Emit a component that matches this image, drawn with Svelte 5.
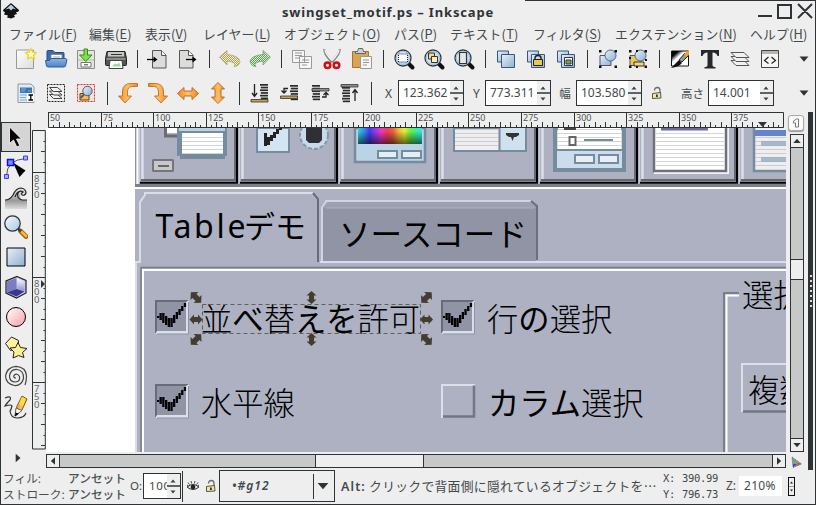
<script>
  const menus = [
    ['ファイル', 'F', 80], ['編集', 'E', 56], ['表示', 'V', 58], ['レイヤー', 'L', 81], ['オブジェクト', 'O', 110],
    ['パス', 'P', 56], ['テキスト', 'T', 83], ['フィルタ', 'S', 82], ['エクステンション', 'N', 135], ['ヘルプ', 'H', 62]
  ];
  const commands = ['new', 'open', 'save', 'print', '|', 'import', 'export', '|', 'undo', 'redo', '|', 'copy', 'cut', 'paste', '|',
    'zoomsel', 'zoomdraw', 'zoompage', '|', 'dup', 'clone', 'unlink', '|', 'group', 'ungroup', '|', 'fill', 'text', 'layers', 'xml'];
  const controls = ['selall', 'sellayers', 'desel', '|', 'rotl', 'rotr', 'fliph', 'flipv', '|', 'bottom', 'lower', 'raise', 'top', '|'];
  const tools = ['select', 'node', 'tweak', 'zoom', 'rect', 'box3d', 'circle', 'star', 'spiral', 'pencil'];
  const hTicks = Array.from({ length: 140 }, (_, i) => ({ x: Math.round(48 + i * 5.255), i })).filter((t) => t.x < 780);
  const vTicks = Array.from({ length: 31 }, (_, i) => ({ y: Math.round(130 + i * 10.5), i }));
  const hLabels = Array.from({ length: 14 }, (_, i) => ({ x: Math.round(48 + i * 52.55), n: 50 + i * 25 }));
  const vLabels = [[172, '850'], [277, '800'], [382, '750']];
  const hues = ['#28d8d0', '#3a8cf0', '#3c3cf0', '#9c38e8', '#f038c0', '#f03c60', '#e86038', '#f0b838', '#e0f038', '#70f040', '#38f0a0', '#38e0e8'];
  const ticks = [[157, 316, 2], [159.5, 313, 7], [162.2, 313, 10], [165, 316, 9], [167.700, 318, 9], [170.4, 318, 9], [173, 315, 8], [175.7, 312, 7], [178.4, 309, 6], [181.1, 306, 5], [183.800, 303, 4]];
</script>

{#snippet lens()}
  <path d="M16 16l4.500 4.500" stroke="#111" stroke-width="4" stroke-linecap="round" />
  <circle cx="11" cy="11" r="8" fill="url(#glass)" stroke="#30363c" stroke-width="1.300" />
  <circle cx="11" cy="11" r="6.700" fill="none" stroke="#a8c4e4" stroke-width="1.200" />
{/snippet}

{#snippet bars(y0)}
  {#each [0, 1, 2, 3, 4, 5] as n}
    <rect x={12 + (n % 2) * .8} y={y0 + n * 2.7} width={8 - (n % 2) * .8} height="1.700" fill="#2a2a2a" />
  {/each}
{/snippet}

{#snippet icon(name)}
  <svg class="ic" viewBox="0 0 24 24" width="24" height="24">
    {#if name === 'new'}
      <path d="M2.500 3h17v18.500h-17z" fill="url(#paper)" stroke="#9a9a96" />
      <path d="M17 1.800l1.700 3.200 3.500.6-2.500 2.600.5 3.500-3.200-1.600-3.200 1.600.5-3.500-2.500-2.600 3.500-.6z" fill="#fffce0" stroke="#f4d428" stroke-width="1.400" />
    {:else if name === 'open'}
      <path d="M3 4.500q0-1 1-1h5l2 2h8q1 0 1 1v12H3z" fill="#3c6caa" stroke="#244a80" />
      <path d="M7 7.500h11v8H7z" fill="#fff" stroke="#888" /><path d="M9 10h7M9 12h5" stroke="#aaa" />
      <path d="M1.500 13.500h4l1.500-2h14.500l1.500 1-1.500 6.500-1 1H3.500l-1-1z" fill="url(#blue)" stroke="#2c5c9c" />
    {:else if name === 'save'}
      <path d="M3.500 3.500h17v18h-17z" fill="#e4e5e2" stroke="#8c8e8a" /><path d="M4 13h16" stroke="#b4b6b2" />
      <path d="M7 15.500h10v4.500H7z" fill="#fafafa" stroke="#777" /><path d="M10 17.800h4" stroke="#444" />
      <path d="M10 2h3.500v6h4.500L11.800 14.500 5.500 8H10z" fill="#7ce040" stroke="#388c14" />
    {:else if name === 'print'}
      <path d="M3 4.500h18l1.500 7v6q0 1-1 1h-19q-1 0-1-1v-6z" fill="#555753" stroke="#222" />
      <path d="M4 5h16v4.500H4z" fill="#c8cac6" /><path d="M7 7.500h11" stroke="#333" />
      <path d="M2.500 11h19v2h-19z" fill="#8a8c88" /><path d="M6 13.500h12l1 8H5z" fill="#fff" stroke="#444" />
      <path d="M8 19.500l3-3 2 1 2-2 2 4z" fill="#98dc90" />
    {:else if name === 'import' || name === 'export'}
      {@const dx = name === 'import' ? 3 : 0}
      <path d="M{3.5 + dx} 3.500h9l4.500 4.500v13h-13.500z" fill="#dcdddb" stroke="#555" />
      <path d="M{12.5 + dx} 3.500v5h4.500" fill="#fff" stroke="#555" />
      {#if name === 'import'}<path d="M1 12.500h7" stroke="#000" stroke-width="1.300" /><path d="M7.500 9.500l4 3-4 3z" />
      {:else}<path d="M10 12.500h8" stroke="#000" stroke-width="1.300" /><path d="M16.500 9.500l4 3-4 3z" />{/if}
    {:else if name === 'undo'}
      <path d="M1.500 10L9 3.500v4q12 1 13 7-1 5-6 5 4-4-7-5.500v4z" fill="url(#dotgold)" stroke="#b0a672" stroke-width=".8" />
    {:else if name === 'redo'}
      <path d="M22.500 10L15 3.500v4q-12 1-13 7 1 5 6 5-4-4 7-5.500v4z" fill="url(#dotgreen)" stroke="#7aa672" stroke-width=".8" />
    {:else if name === 'copy'}
      <path d="M2.500 3.500h12v12h-12zM9.500 9.500h12v12h-12z" fill="#f6f6f5" stroke="#999" />
      <path d="M5 6h7M5 8.500h7M5 11h4M12 13h7M12 15.500h7M12 18h5" stroke="#999" />
    {:else if name === 'cut'}
      <path d="M4.500 2q-1 4 7.500 13M19.500 2q1 4-8 13" stroke="#888a85" stroke-width="2.600" fill="none" />
      <path d="M5 2.500q0 4 7 11M19 2.500q0 4-7 11" stroke="#f8f8f8" stroke-width="1.300" fill="none" />
      <circle cx="7.500" cy="18.300" r="2.800" fill="none" stroke="#cc1018" stroke-width="2.500" /><circle cx="16.500" cy="18.300" r="2.800" fill="none" stroke="#cc1018" stroke-width="2.500" />
    {:else if name === 'paste'}
      <path d="M2.500 4.500h16v16h-16z" fill="#d9a458" stroke="#a87428" />
      <path d="M5.500 6.500v-2h2l1-3h4l1 3h2v2z" fill="#d0d0ce" stroke="#666" />
      <path d="M10.500 9.500h11v12h-11z" fill="#f6f6f5" stroke="#999" /><path d="M13 13h6M13 15.500h6M13 18h4" stroke="#999" />
    {:else if name === 'zoomsel'}
      {@render lens()}<path d="M6.500 7h9v8h-9z" fill="#fff" stroke="#222" stroke-dasharray="1 1" />
    {:else if name === 'zoomdraw'}
      {@render lens()}<path d="M6.500 6h6v6h-6z" fill="#f0d880" stroke="#333" /><path d="M9.500 9.500h6v6h-6z" fill="#fff0b0" stroke="#333" />
    {:else if name === 'zoompage'}
      {@render lens()}<path d="M7.500 5.500h7v11h-7z" fill="#e4e8ec" stroke="#333" stroke-width="1.200" />
    {:else if name === 'dup' || name === 'clone' || name === 'unlink'}
      <path d="M3.500 4h11v11h-11z" fill="url(#sky)" stroke="#37567c" /><path d="M7.500 7.500h13v13h-13z" fill="url(#sky)" stroke="#37567c" />
      {#if name === 'clone'}<path d="M11 13v-2q0-2.500 3-2.500t3 2.500v2" fill="none" stroke="#222" stroke-width="1.400" /><path d="M9.500 12.500h9v6h-9z" fill="#f0c848" stroke="#222" />{/if}
      {#if name === 'unlink'}<path d="M10.500 10.500h8v8h-8z" fill="#fff" stroke="#333" /><path d="M12 13h5v4h-5z" fill="#78b040" stroke="#333" />{/if}
    {:else if name === 'group' || name === 'ungroup'}
      <path d="M4 8.500h11v10H4z" fill={name === 'group' ? 'url(#sky)' : '#f0c850'} stroke="#556" />
      {#if name === 'ungroup'}<path d="M8 15h10v4H8z" fill="#f4d878" stroke="#333" />{/if}
      <circle cx="14.500" cy="8.500" r="5.500" fill="url(#sky)" stroke="#476890" />
      <path d="M3 3h2.500v2.500H3zM18.500 3H21v2.500h-2.500zM3 18.500h2.500V21H3zM18.500 18.500H21V21h-2.500z" fill="#111" />
      {#if name === 'ungroup'}<path d="M10 3h2v2h-2zM3 10h2v2H3zM10 19h2v2h-2zM19 12h2v2h-2z" fill="#111" />{/if}
    {:else if name === 'fill'}
      <path d="M3.500 4h17v15h-17z" fill="url(#bw)" stroke="#111" /><path d="M3 21l8-8 3 3q-3 4-11 5z" fill="#111" />
      <path d="M11 13l6-7 3 3-6 6z" fill="#999" stroke="#222" /><path d="M16 7l5-4v5l-3 2z" fill="#f4a020" />
    {:else if name === 'text'}
      <path d="M3 3h18v6h-1.500q-1-3.500-5-3.500V18q0 2 3 2v1.500h-11V20q3 0 3-2V5.500q-4 0-5 3.500H3z" fill="#26292b" />
    {:else if name === 'layers'}
      {#each [16, 12, 8] as y}<path d="M3 {y - 2.5}h13l5 5H8z" fill="#f2f2f1" stroke="#555" />{/each}
    {:else if name === 'xml'}
      <path d="M3.500 3.500h17v17h-17z" fill="#f5f5f3" stroke="#444" /><path d="M4 4h16v3H4z" fill="#b4b6b4" />
      <path d="M10.500 10l-4 3.500 4 3M13.500 10l4 3.500-4 3" fill="none" stroke="#222" stroke-width="1.200" />
    {:else if name === 'selall'}
      <path d="M4 3h13l3 3v15.500H4z" fill="#e2ebf5" stroke="#8f989f" /><path d="M6 6.500h12V12H6z" fill="#3c74ac" />
      <path d="M7 8h5M7 10h4M14 10h3M6 14h8M6 16.500h6M6 19h7" stroke="#7cabd8" />
      <path d="M13 12.500h7.500v8H13z" fill="#fff" /><path d="M14.500 14h4.500M16.800 14v5M14.500 19h4.500" stroke="#000" stroke-width="1.300" />
    {:else if name === 'sellayers' || name === 'desel'}
      <rect x="3.500" y="3.500" width="17" height="17" fill={name === 'desel' ? '#f2e4e2' : '#eee'} stroke={name === 'desel' ? '#e83030' : '#222'} stroke-width="1" stroke-dasharray="2 1" />
      {#if name === 'desel'}<path d="M6 12.500h9v6.500H6z" fill="#f0c040" stroke="#5a4810" /><circle cx="13.500" cy="10" r="4.700" fill="url(#sky)" stroke="#557" /><path d="M10 13.500l-3.500 3.500" stroke="#557" stroke-width="2" />
      {:else}{#each [15, 11.5, 8] as y}<path d="M5.500 {y - 1.5}h8l4.500 4H9.500z" fill="#f2f2f1" stroke="#444" />{/each}{/if}
    {:else if name === 'rotl'}
      <path d="M21.500 2.500H15q-8 0-8.500 7.500v5H2.500l6.500 7 6.500-7h-4v-4q0-5 4-5.500h6z" fill="url(#orange)" stroke="#c07020" stroke-width=".9" />
    {:else if name === 'rotr'}
      <path d="M2.500 2.500H9q8 0 8.500 7.500v5h4L15 22l-6.500-7h4v-4q0-5-4-5.500h-6z" fill="url(#orange)" stroke="#c07020" stroke-width=".9" />
    {:else if name === 'fliph'}
      <path d="M1.500 12.500L8 6.500v3.500h8V6.500l6.500 6-6.500 6V15H8v3.500z" fill="url(#orange)" stroke="#b86414" stroke-width=".9" />
    {:else if name === 'flipv'}
      <path d="M12 1.500L18.500 8H15v8h3.500L12 22.500 5.500 16H9V8H5.500z" fill="url(#orange)" stroke="#b86414" stroke-width=".9" />
    {:else if name === 'bottom'}
      {@render bars(3)}<path d="M6.500 3v12M4 12l2.500 3.500L9 12" fill="none" stroke="#222" stroke-width="1.300" /><path d="M3 18.500h17v2.500H3z" fill="#c8a050" stroke="#333" stroke-width=".8" />
    {:else if name === 'lower'}
      {@render bars(4)}<path d="M10 7.500H6v4M3.500 9.500L6 12l2.500-2.500" fill="none" stroke="#222" stroke-width="1.300" /><path d="M2.500 15h17v2.500h-17z" fill="#c8a050" stroke="#333" stroke-width=".8" />
    {:else if name === 'raise'}
      <g transform="translate(-8 0)">{@render bars(4)}</g><path d="M4 7.500h17v2.500H4z" fill="#8a9098" stroke="#333" stroke-width=".8" /><path d="M14 16h4v-4M15.500 14l2.500-2.500 2.500 2.500" fill="none" stroke="#222" stroke-width="1.300" />
    {:else if name === 'top'}
      <g transform="translate(-8 0)">{@render bars(6)}</g><path d="M3 3.500h17V6H3z" fill="#8a9098" stroke="#333" stroke-width=".8" /><path d="M17 20V9M14.500 12L17 8.500l2.500 3.500" fill="none" stroke="#222" stroke-width="1.300" />
    {:else if name === 'select'}
      <path d="M5.500 2v16.500l4-3.500 3.300 7 3-1.500-3.300-6.500h5z" fill="#000" stroke="#fff" stroke-width=".8" />
    {:else if name === 'node'}
      <path d="M2.500 21q0-16 19-17.500" fill="none" stroke="#555" /><path d="M9 7.500l12.500 8-6 6.500z" fill="#000" />
      <path d="M3.500 4.500h6v6h-6z" fill="#7c8cf4" stroke="#1010e0" stroke-width="1.500" /><path d="M.5 19.500h4v4h-4zM19.500 1h4v4h-4z" fill="#a8a8ff" stroke="#4040e0" />
    {:else if name === 'tweak'}
      <path d="M1 15q5 0 8-5 3-7 9-7 5 1 4 6-2-2-4-1-4 3 0 7h5v9H1z" fill="url(#grayfade)" /><path d="M1 15q5 0 8-5 3-7 8-7 5 1 5 5-1 3-4 2-1-2 1-3-3-2-5 1-2 5 4 7h5M11 12q2-6 6-6" fill="none" stroke="#222" stroke-width="1.200" />
    {:else if name === 'zoom'}
      <path d="M16.500 16l5.500 5.500" stroke="#9a5c00" stroke-width="4.600" stroke-linecap="round" /><path d="M17.500 16.800l4.500 4.200" stroke="#f8b838" stroke-width="2.800" stroke-linecap="round" />
      <path d="M14 13.500l3 3" stroke="#444" stroke-width="2.500" />
      <circle cx="8.500" cy="8.500" r="7.700" fill="url(#glass)" stroke="#333" stroke-width="1.300" />
    {:else if name === 'rect'}
      <path d="M3 3h18v18H3z" fill="url(#sky)" stroke="#000" />
    {:else if name === 'box3d'}
      <path d="M13 1.500l9 4V18l-9.500 5L2 18V6z" fill="#c8c8ec" stroke="#222" stroke-width="1.200" /><path d="M12.500 3l8 3.500v9.500l-8-2z" fill="url(#violet)" /><path d="M3 6.500L12.500 3v11L3 17.500z" fill="#7c7cc4" /><path d="M3 17.500l9.500-3.500 8 2.500-8 5z" fill="#38388c" />
    {:else if name === 'circle'}
      <circle cx="12" cy="12" r="9.500" fill="url(#pink)" stroke="#000" />
    {:else if name === 'star'}
      <path d="M7.500 2l7 3.500-.5 8-7.500 2-5-7z" fill="#fff2a0" stroke="#222" /><path d="M14 7.500l2.500 5 6.500 1-4.500 4 1.500 5-5.500-2-5.500 2.500 1-6-4-4 5.500-.5z" fill="#ffef90" stroke="#222" />
    {:else if name === 'spiral'}
      <path d="M12 13q-3 0-2-2.500 3-3 5.500 1 1 5-4 5.500-6 0-6-6 1-7 7.500-6.500 7 1 6.500 9-2 7.500-9 7Q2 19 1.500 11 3 2 12 1.300 22 2 22.500 11q0 5-1.500 9" fill="none" stroke="#444" stroke-width="1.200" />
    {:else if name === 'pencil'}
      <path d="M1 3q7-3 5 2-4 4-5 6 7-2 7 0-1 4-2 5 1 7 7 7 7 0 9-5" fill="none" stroke="#333" stroke-width="1.200" />
      <path d="M11 21l2-10 5-10 5 3-5 11z" fill="url(#orange)" stroke="#6a3a00" stroke-width=".8" /><path d="M18 2l4 2-3 7-4-2z" fill="#fce040" /><path d="M11 21l1-8 6 2.500z" fill="#fff" stroke="#444" stroke-width=".8" /><path d="M11 21.500l.5-4 3.500 1z" />
    {/if}
  </svg>
{/snippet}

{#snippet row(names)}
  {#each names as n}
    {#if n === '|'}<span class="sep"></span>{:else}<span class="cell">{@render icon(n)}</span>{/if}
  {/each}
{/snippet}

{#snippet steps()}
  <span class="steps"><svg viewBox="0 0 13 24" width="13" height="24"><path d="M0 12h13" stroke="#2e3436" stroke-width="1.500" /><path d="M3.500 8.500L6 5.500l2.500 3zM3.500 16.500l2.500 3 2.500-3z" fill="#3c4244" /></svg></span>
{/snippet}

{#snippet spin(value)}
  <span class="spin"><span class="val">{value}</span>{@render steps()}</span>
{/snippet}

{#snippet lock()}
  <svg viewBox="0 0 12 14" width="12" height="14"><path d="M3.500 4.500q0-3 3-3 2.500 0 2.500 3v3" fill="none" stroke="#6a6a66" stroke-width="1.300" /><path d="M1.500 7.500l8-1 .5 5.500-8.500.5z" fill="#f0e6a0" stroke="#444" stroke-width=".9" /><path d="M5 8.500h1.800v2.500H5z" fill="#333" /></svg>
{/snippet}

{#snippet arrow(dir, size = 1)}
  <svg viewBox="0 0 12 12" width="12" height="12"><path transform="rotate({dir} 6 6) translate({6 - 6 * size} {6 - 6 * size}) scale({size})" d="M2.300 4h7.400L6 8.200z" fill="#2e3436" /></svg>
{/snippet}

{#snippet handle(x, y, a)}
  {@const s = a === 45 || a === -45 ? 1.12 : 1}
  <path transform="translate({x} {y}) rotate({a}) scale({s})" d="M-6.500 0L-2-5v2.500h4V-5L6.500 0 2 5V2.500h-4V5z" fill="#433d30" />
{/snippet}

{#snippet checked(x, y)}
  <g transform="translate({x - 155} {y - 300})">
    <path d="M155 300h34v34h-34z" fill="#dcdfe9" /><path d="M155 300h34l-3 2v29h-29l-2 3z" fill="#686b78" /><path d="M157 302h29v29h-29z" fill="#9194a4" /><path d="M188.500 302v32H157" fill="none" stroke="#8e91a4" />
    {#each ticks as [tx, ty, h]}<rect x={tx} y={ty} width="2.300" height={h} fill="#000" />{/each}
  </g>
{/snippet}

<svg class="defs" width="0" height="0">
  <defs>
    <linearGradient id="paper" x2="1" y2="1"><stop stop-color="#fff" /><stop offset="1" stop-color="#dcdcda" /></linearGradient>
    <linearGradient id="blue" x2="0" y2="1"><stop stop-color="#8ab4e4" /><stop offset="1" stop-color="#4c82c4" /></linearGradient>
    <linearGradient id="sky" x2="1" y2="1"><stop stop-color="#e8f0f8" /><stop offset="1" stop-color="#8fb0d0" /></linearGradient>
    <linearGradient id="glass" x2="1" y2="1"><stop stop-color="#f4faff" /><stop offset="1" stop-color="#a8c8e8" /></linearGradient>
    <linearGradient id="orange" x2="1" y2="0"><stop stop-color="#f88818" /><stop offset=".5" stop-color="#fcc070" /><stop offset="1" stop-color="#f08820" /></linearGradient>
    <linearGradient id="bw" x2="1" y2="1"><stop offset=".2" stop-color="#000" /><stop offset=".4" stop-color="#fff" /></linearGradient>
    <linearGradient id="pink" x2="1" y2="1"><stop stop-color="#fff" /><stop offset="1" stop-color="#fb9ca4" /></linearGradient>
    <linearGradient id="violet" x2="0" y2="1"><stop stop-color="#fff" /><stop offset="1" stop-color="#9090d8" /></linearGradient>
    <linearGradient id="grayfade" x2="0" y2="1"><stop stop-color="#eee" /><stop offset=".6" stop-color="#999" /><stop offset="1" stop-color="#ddd" /></linearGradient>
    <linearGradient id="hue">{#each hues as c, i}<stop offset={i / 11} stop-color={c} />{/each}</linearGradient>
    <linearGradient id="shade" x2="0" y2="1"><stop offset=".2" stop-color="#000" stop-opacity="0" /><stop offset="1" stop-opacity=".6" /></linearGradient>
    <pattern id="dotgold" width="2" height="2" patternUnits="userSpaceOnUse"><path d="M0 0h2v2H0z" fill="#f4f0d0" /><path d="M0 0h1v1H0zM1 1h1v1H1z" fill="#a89f58" /></pattern>
    <pattern id="dotgreen" width="2" height="2" patternUnits="userSpaceOnUse"><path d="M0 0h2v2H0z" fill="#dcf0d4" /><path d="M0 0h1v1H0zM1 1h1v1H1z" fill="#609858" /></pattern>
    <pattern id="lines" width="4" height="4" patternUnits="userSpaceOnUse"><path d="M0 1h4v1H0z" fill="#a8aabc" fill-opacity=".5" /></pattern>
  </defs>
</svg>

<div class="window">
  <header class="title">
    <svg class="logo" viewBox="0 0 16 16" width="16" height="16"><path d="M8 0l8 7q0 2-3 2l1 2-3 1 1 2-4 1.500-4-1 1-2-4-1 1-2.500Q0 9 0 7z" fill="#111" /><path d="M8 1.500l5 5-3-1-2 2-2-2-3.500 1z" fill="#bcd0ee" /></svg>
    <h1>swingset_motif.ps – Inkscape</h1>
    <svg class="wm" viewBox="0 0 58 20" width="58" height="20" fill="none" stroke="#2e3436" stroke-width="2"><path d="M1 16h14M21 5h13v13H21zM41 4l14 14M55 4L41 18" /></svg>
  </header>

  <nav class="menu">
    {#each menus as [label, key, w]}<span style:width="{w}px">{label}(<u>{key}</u>)</span>{/each}
  </nav>

  <div class="bar">
    {@render row(commands)}
    <span class="more">{@render arrow(0, 1.2)}</span>
  </div>

  <div class="bar second">
    {@render row(controls)}
    <span class="lab x">X</span>{@render spin('123.362')}
    <span class="lab y">Y</span>{@render spin('773.311')}
    <span class="lab w">幅</span>{@render spin('103.580')}
    <span class="lab l">{@render lock()}</span>
    <span class="lab h">高さ</span>{@render spin('14.001')}
    <span class="more">{@render arrow(0, 1.2)}</span>
  </div>

  <main>
    <aside class="tools">
      {#each tools as t, i}<span class="tool" class:active={i === 0}>{@render icon(t)}</span>{/each}
      <span class="expand">{@render arrow(-90, 1.15)}</span>
    </aside>

    <svg class="vruler" viewBox="32 112 14 341" width="14" height="341">
      <path d="M32.500 130.500h12.800v318.500H32.500z" fill="#eee" stroke="#2e3436" />
      {#each vTicks as t}
        {@const major = (t.i - 4) % 10 === 0}
        {#if t.y > 131}<path d="M{major ? 33 : t.i % 2 === 0 ? 41 : 43.5} {t.y + .5}H45" stroke="#2e3436" />{/if}
      {/each}
      {#each vLabels as [y, s]}
        <text font-size="9.500" fill="#666">{#each s.split('') as ch, i}<tspan x="34" y={y + 10 + i * 8}>{ch}</tspan>{/each}</text>
      {/each}
      <path d="M41 280v8l4-4z" fill="#2e3436" />
    </svg>

    <section class="center">
      <svg class="hruler" viewBox="46 112 740 16" width="740" height="16">
        <path d="M48.500 112.500h735v15h-735z" fill="#eee" stroke="#2e3436" />
        {#each hTicks as t}<path d="M{t.x + .5} {t.i % 10 === 0 ? 112 : t.i % 2 === 0 ? 122 : 125}V127" stroke="#2e3436" />{/each}
        {#each hLabels as l}<text x={l.x + 2} y="121.300" font-size="9.500" fill="#555" textLength={l.n < 100 ? 10 : 15.5} lengthAdjust="spacingAndGlyphs">{l.n}</text>{/each}
        <path d="M758 122h9l-4.500 5z" fill="#2e3436" />
      </svg>

      <svg class="canvas" viewBox="46 128 740 324" width="740" height="324">
        <path d="M46 128h740v324H46z" fill="#fff" />
        <path d="M135 128h651v324H135z" fill="#aeb1c2" />
        <path d="M135.500 128v59" stroke="#8e91a0" /><path d="M137.500 128v56" stroke="#fff" stroke-width="2" />
        {#each [0, 1, 2, 3, 4, 5, 6] as i}
          <g transform="translate({i * 100} 0)">
            <path d="M139.500 128v54" stroke="#caccd8" /><path d="M142.500 128v52" stroke="#dcdee8" stroke-width="2.500" />
            <path d="M141 180h94v-52" fill="none" stroke="#666874" stroke-width="2" /><path d="M140 182.800h97v-55" fill="none" stroke="#000" stroke-width="2" />
          </g>
        {/each}
        <path d="M135 184h651v3H135z" fill="#7c7f8f" /><path d="M135 187h651v2H135z" fill="#fff" />

        <path d="M165.500 128v8h12" fill="none" stroke="#6c6d74" stroke-width="3" /><path d="M167 128h10v5h-10z" fill="#fff" /><path d="M177 128h50v28h-50z" fill="#758b9e" /><path d="M182 128h41v26h-41z" fill="#fff" /><path d="M179 128h46v3h-46z" fill="#bad1e4" /><path d="M182 131h41v2h-41z" fill="#758b9e" /><path d="M180 156h45v3h-45z" fill="#758b9e" />
        <path d="M182 134h41v20h-41z" fill="url(#lines)" />
        <path d="M153 160h20v11h-20z" fill="#c8c8cb" stroke="#75757a" stroke-width="2" stroke-linejoin="bevel" /><path d="M158 166h11" stroke="#66676c" stroke-width="2" />
        <path d="M257 128h32v24h-32z" fill="#d5e4f1" stroke="#758b9e" stroke-width="2" /><path d="M265.500 133v13M268.500 137v8M271.500 135v6M274.500 132v6M277.500 129v5M280.500 128v2" stroke="#222" stroke-width="3" />
        <circle cx="314" cy="135" r="14" fill="#c8dbec" stroke="#8298ab" stroke-width="2" stroke-dasharray="4 2" /><path d="M306 128h16v12l-3 3h-10l-3-3z" fill="#303034" />
        <path d="M355 128h70v34h-70z" fill="#bcd3e6" stroke="#758b9e" stroke-width="2.500" /><path d="M358 128h64v16h-64z" fill="url(#hue)" /><path d="M358 128h64v16h-64z" fill="url(#shade)" />
        <path d="M378 151h19v7h-19zM402 151h19v7h-19z" fill="#e4eef6" stroke="#758b9e" stroke-width="2" />
        <path d="M454 128h72v23h-72z" fill="#eee" stroke="#758b9e" stroke-width="2" /><path d="M500 128h25v22h-25z" fill="#cfe0ef" /><path d="M499.500 128v22" stroke="#758b9e" stroke-width="2" /><path d="M455 128h44v21h-44z" fill="url(#lines)" /><path d="M506 133h13v2l-3 2h-2l-1.500 4-1.500-4h-2l-3-2z" fill="#333" />
        <path d="M555 128h69v42h-69z" fill="#cbddec" stroke="#758b9e" stroke-width="4" /><path d="M558 128h63v22h-63z" fill="#fff" /><path d="M558 128h63v22h-63z" fill="url(#lines)" /><path d="M555 150h70" stroke="#758b9e" stroke-width="2" />
        <path d="M564 128h12" stroke="#444" stroke-width="4" /><path d="M569.500 137h6v8h-6z" fill="#fff" stroke="#666" stroke-width="2" /><path d="M584 140h29" stroke="#758b9e" stroke-width="2" /><path d="M575 155h19v8h-19zM599 155h19v8h-19z" fill="#e8eef4" stroke="#758b9e" stroke-width="2" />
        <path d="M654 128h75v46h-75z" fill="#f4f4f8" /><path d="M654 128v43h72v-43" fill="#fff" stroke="#707078" stroke-width="2.500" /><path d="M656 132h68v37h-68z" fill="url(#lines)" /><path d="M661 129h47" stroke="#6a6aa4" stroke-width="3" />
        <path d="M754 128h32v43h-32z" fill="#eee" /><path d="M754 128v43h32" fill="none" stroke="#758b9e" stroke-width="2.500" /><path d="M755 130h31v6h-31z" fill="#6484cc" /><path d="M761 141h25v5h-25zM761 157h25v5h-25z" fill="#a5b9cf" /><path d="M755 136h31v33h-31z" fill="url(#lines)" />

        <path d="M136 452V262h4v-60l5-7v-2h168" fill="none" stroke="#dadde8" stroke-width="2" /><path d="M313 193l5 6v63" fill="none" stroke="#686b78" stroke-width="2" />
        <path d="M321 262v-57h215v57z" fill="#9194a4" /><path d="M325 202h207l4 6H322z" fill="#9da0b0" />
        <path d="M322 261v-54l4-5v-1h205" fill="none" stroke="#d2d4e4" stroke-width="2" /><path d="M326 208h208" stroke="#adb0c0" /><path d="M531 201l6 5v54" fill="none" stroke="#6b6e7c" stroke-width="2" />
        <path d="M320 262h466" stroke="#dadde8" stroke-width="2" />
        <path d="M141 452V267.500h645" fill="none" stroke="#787b8c" stroke-width="1.500" /><path d="M143 452V270h643" fill="none" stroke="#fff" stroke-width="2" />

        <text x="155.500" y="238" font-size="32" textLength="90" class="lat">Table</text>
        <text x="244" y="238" font-size="31" textLength="62" class="kana">デモ</text>
        <text x="339" y="246" font-size="31.500" textLength="188" class="kana">ソースコード</text>

        {@render checked(155, 300)}{@render checked(441, 300)}{@render checked(155, 384)}
        <path d="M442 418v-33h33" fill="none" stroke="#dcdfe9" stroke-width="2" /><path d="M443 416.500h31v-31" fill="none" stroke="#737684" stroke-width="2.500" />
        <g font-size="31.300" font-weight="300">
          <text x="201" y="331">並<tspan class="kana">べ</tspan>替<tspan class="kana">えを</tspan>許可</text>
          <text x="487" y="331">行<tspan class="kana">の</tspan>選択</text>
          <text x="201" y="415">水平線</text>
          <text x="488" y="415"><tspan class="kana">カラム</tspan>選択</text>
        </g>
        <path d="M724 452V293h15" fill="none" stroke="#7a7d8c" stroke-width="2" /><path d="M726.500 452V295.500H739" fill="none" stroke="#fff" stroke-width="2" />
        <path d="M742 412v-48h44" fill="none" stroke="#dcdfe9" stroke-width="2" /><path d="M743 411.500h43" stroke="#737684" stroke-width="2.500" />
        <g font-size="31.300" font-weight="300"><text x="742" y="307">選択</text><text x="748" y="402">複数</text></g>

        <rect x="202.500" y="304.500" width="218" height="29" fill="none" stroke="#5f6058" stroke-dasharray="4 3" />
        {@render handle(196, 297.5, 45)}{@render handle(311.5, 297.5, 90)}{@render handle(426.500, 297.5, -45)}
        {@render handle(196, 319.5, 0)}{@render handle(426.5, 319.5, 0)}
        {@render handle(196, 339.5, -45)}{@render handle(311.5, 339.5, 90)}{@render handle(426.5, 339.5, 45)}
      </svg>

      <div class="hscroll">
        <span class="btn">{@render arrow(90)}</span><span class="trough a"></span><span class="thumb"></span><span class="trough b"></span><span class="btn">{@render arrow(-90)}</span>
      </div>
    </section>

    <aside class="right">
      <span class="pagebtn"><svg viewBox="0 0 14 14" width="14" height="14"><path d="M4.500 5l3-2h2v8h-3V7h-2z" fill="#fff" stroke="#777" /></svg></span>
      <div class="vscroll">
        <span class="btn">{@render arrow(180)}</span><span class="trough a"></span><span class="thumb"></span><span class="trough b"></span><span class="btn">{@render arrow(0)}</span>
      </div>
      <svg class="cms" viewBox="0 0 12 13" width="12" height="13"><path d="M1 1l9.500 7L2 11.500z" fill="#7aa088" stroke="#666" stroke-dasharray="1 1" /><path d="M2 8h4l-4 3.500z" fill="#4848c0" /><path d="M6 7h4l-3 3z" fill="#d05050" /></svg>
    </aside>
    <div class="dock"><i></i><i></i><i></i><i></i><i></i><i></i><i></i></div>
  </main>

  <footer>
    <div class="style">
      <span>フィル:</span><b>アンセット</b>
      <span>ストローク:</span><b>アンセット</b>
    </div>
    <span class="olab">O:</span>
    <span class="spin small"><span class="val">100</span>{@render steps()}</span>
    <span class="vline"></span>
    <span class="eye"><svg viewBox="0 0 14 14" width="14" height="14"><path d="M1 8q6-5 12 0-6 5-12 0z" fill="#e4e4e2" stroke="#333" /><circle cx="7" cy="8" r="2.300" fill="#222" /><path d="M2 3.500l1.500 2M5 2l.7 2.500M9 2l-.7 2.500M12 3.500l-1.500 2M1 6l1.500 1M13 6l-1.500 1" stroke="#444" /></svg></span>
    <span class="lk">{@render lock()}</span>
    <span class="combo"><em>•#g12</em><span class="drop">{@render arrow(0, 1.45)}</span></span>
    <p class="hint"><strong>Alt:</strong> クリックで背面側に隠れているオブジェクトを…</p>
    <div class="coords"><span>X:</span><span>390.99</span><span>Y:</span><span>796.73</span></div>
    <span class="zlab">Z:</span>
    <span class="zval">210%</span>
    <span class="zstep"><svg viewBox="0 0 5 17" width="5" height="17"><path d="M1 5.500h3L2.500 3.500zM1 11.500h3l-1.500 2z" fill="#222" /><path d="M0 8.500h5" stroke="#999" /></svg></span>
  </footer>
</div>

<style>
  .window {
    width: 816px; height: 505px; box-sizing: border-box; overflow: hidden;
    display: flex; flex-direction: column;
    background: linear-gradient(#2e3436, #2e3436) 524px 0 / 292px 1px no-repeat, #eee;
    border-left: 1px solid #2e3436; border-right: 1px solid #2e3436; border-bottom: 1px solid #2e3436;
    font-family: "Noto Sans CJK JP", sans-serif; font-size: 12.8px; color: #43494b;
  }
  .defs { position: absolute; }
  svg { display: block; flex: none; }
  svg text { font-family: "Noto Sans", "Noto Sans CJK JP", sans-serif; }
  .canvas text { font-family: "Noto Sans CJK JP", sans-serif; }
  .canvas .kana { font-weight: 400; }
  .canvas .lat { font-family: "Noto Sans", sans-serif; }
  .title { height: 24px; display: flex; align-items: center; padding-left: 2px; flex: none; }
  .logo { margin-top: -2px; }
  h1 { flex: 1; margin: 0 0 0 263px; font: bold 13px/24px "Noto Sans", sans-serif; letter-spacing: .83px; color: #2e3436; white-space: nowrap; }
  .wm { align-self: flex-start; }
  .menu { height: 19px; line-height: 19px; display: flex; padding-left: 8px; flex: none; white-space: nowrap; letter-spacing: .2px; }
  .menu span { flex: none; }
  u { text-underline-offset: 2px; }
  .bar { height: 34px; flex: none; display: flex; align-items: center; padding: 0 0 2px 10px; box-sizing: border-box; }
  .cell { width: 30px; display: flex; justify-content: center; flex: none; }
  .sep { width: 1px; height: 18px; margin: 0 5px 0 6px; background: #2e3436; flex: none; }
  .second .sep { height: 23px; }
  .more { margin-left: auto; padding-right: 5px; }
  .second { height: 35px; padding-bottom: 3px; }
  .lab { text-align: center; flex: none; box-sizing: border-box; }
  .x, .y { font-family: "Noto Sans", sans-serif; font-size: 12px; }
  .lab.x { width: 21px; padding-left: 2px; }
  .lab.y { width: 21px; padding-left: 4px; }
  .lab.w { width: 25px; padding-left: 3px; font-size: 11.500px; }
  .lab.l { width: 30px; padding-left: 9px; }
  .lab.h { width: 36px; padding-left: 5px; font-size: 11.500px; }
  .spin { width: 66px; height: 26px; box-sizing: border-box; border: 1px solid #2e3436; display: flex; flex: none; background: #fff; }
  .val { flex: 1; min-width: 0; padding-left: 4px; font: 12px/24px "Noto Sans", sans-serif; overflow: hidden; }
  .steps { width: 13px; background: #eee; flex: none; }
  main { height: 359px; flex: none; display: flex; }
  .tools { width: 31px; padding-top: 10px; box-sizing: border-box; }
  .tool { width: 30px; height: 30px; box-sizing: border-box; display: flex; align-items: center; justify-content: center; }
  .tool.active { border: 1px solid #2e3436; background: #d5d5d5; }
  .expand { display: block; margin: 30px 0 0 11px; }
  .center { width: 740px; }
  .hscroll, .vscroll { border: 1px solid #2e3436; box-sizing: border-box; display: flex; background: #eee; }
  .hscroll { margin-top: 2px; height: 14px; }
  .btn { width: 12px; height: 12px; flex: none; }
  .trough { background: #c7c9c8; }
  .hscroll .trough.a { width: 255px; border-left: 1px solid #2e3436; border-right: 1px solid #2e3436; }
  .hscroll .thumb { width: 107px; }
  .hscroll .trough.b { flex: 1; border-left: 1px solid #2e3436; border-right: 1px solid #2e3436; }
  .right { width: 22px; padding: 3px 0 0 2px; box-sizing: border-box; }
  .pagebtn { display: flex; width: 16px; height: 16px; box-sizing: border-box; border: 1px solid #aaa; border-radius: 3px; background: #fafafa; box-shadow: 0 1px 1px #999; }
  .vscroll { width: 14px; height: 318px; margin: 3px 0 0 2px; flex-direction: column; }
  .vscroll .trough.a { height: 111px; border-top: 1px solid #2e3436; border-bottom: 1px solid #2e3436; }
  .vscroll .thumb { height: 19px; }
  .vscroll .trough.b { flex: 1; border-top: 1px solid #2e3436; border-bottom: 1px solid #2e3436; }
  .cms { margin: 4px 0 0 3px; }
  .dock { width: 5px; height: 358px; background: #2e3436; display: flex; flex-direction: column; align-items: center; gap: 3px; padding-top: 163px; box-sizing: border-box; }
  .dock i { width: 2px; height: 2px; background: #ddd; flex: none; }
  footer { flex: 1; display: flex; }
  .style { display: grid; grid-template-columns: 65px 62px; grid-template-rows: 16px 16px; margin-top: -1px; font-size: 11.700px; line-height: 16px; padding-left: 2px; white-space: nowrap; color: #4a5052; }
  .style b { font-weight: 500; }
  .olab { width: 13px; font: 11.500px/30px "Noto Sans", sans-serif; white-space: nowrap; }
  .small { width: 38px; margin-top: 2px; }
  .small .val { padding-left: 5px; font-size: 11.500px; letter-spacing: .7px; }
  .vline { width: 1px; height: 31px; margin-left: 1px; background: #2e3436; }
  .eye { margin: 8px 0 0 3px; }
  .lk { margin: 8px 0 0 5px; width: 15px; }
  .combo { width: 116px; height: 32px; margin: -1px 0 0 -1px; box-sizing: border-box; border: 1px solid #2e3436; display: flex; align-items: center; flex: none; }
  em { flex: 1; padding-left: 12px; font: italic 600 12px/30px "Noto Sans", sans-serif; letter-spacing: 1px; }
  .drop { height: 25px; width: 21px; border-left: 1px solid #2e3436; display: flex; align-items: center; padding-left: 3px; box-sizing: border-box; }
  .hint { margin: 0 0 0 6px; width: 322px; line-height: 30px; font-size: 12.800px; letter-spacing: .3px; white-space: nowrap; }
  strong { font: 600 12.500px "Noto Sans", sans-serif; letter-spacing: 1.1px; }
  .coords { display: grid; grid-template-columns: 19px 44px; grid-template-rows: 16px 16px; margin-top: -1px; font: 10.500px/17px "DejaVu Sans Mono", monospace; letter-spacing: -.3px; }
  .zlab { width: 13px; font: 12px/30px "Noto Sans", sans-serif; }
  .zval { width: 43px; height: 20px; margin-top: 5px; padding-left: 5px; box-sizing: border-box; background: #fff; font: 12px/20px "Noto Sans", sans-serif; letter-spacing: .3px; }
  .zstep { margin: 6px 0 0 6px; height: 17px; border: 1px solid #111; }
  :global(body) { overflow: hidden; }
</style>
